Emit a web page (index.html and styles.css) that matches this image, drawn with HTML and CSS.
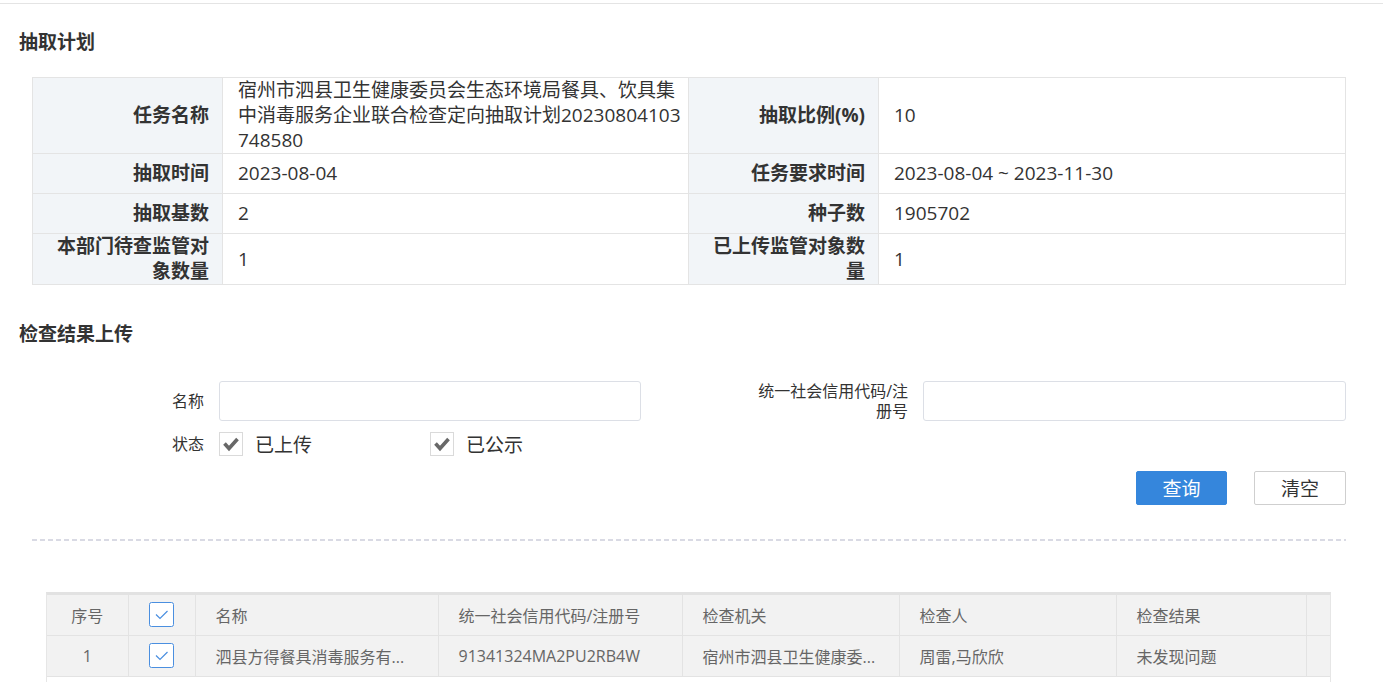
FILE: index.html
```html
<!DOCTYPE html>
<html lang="zh-CN">
<head>
    <meta charset="UTF-8">
    <title>抽取计划</title>
    <link rel="stylesheet" href="styles.css">
</head>
<body>
    <div class="topbar"></div>

    <div class="page">
        <h2 class="section-title">抽取计划</h2>
        <div class="panel">
            <table class="plan">
                <colgroup>
                    <col class="col-label">
                    <col class="col-value">
                    <col class="col-label">
                    <col>
                </colgroup>
                <tr class="row-tall">
                    <th>任务名称</th>
                    <td>宿州市泗县卫生健康委员会生态环境局餐具、饮具集中消毒服务企业联合检查定向抽取计划20230804103748580</td>
                    <th>抽取比例(%)</th>
                    <td>10</td>
                </tr>
                <tr>
                    <th>抽取时间</th>
                    <td>2023-08-04</td>
                    <th>任务要求时间</th>
                    <td>2023-08-04 ~ 2023-11-30</td>
                </tr>
                <tr>
                    <th>抽取基数</th>
                    <td>2</td>
                    <th>种子数</th>
                    <td>1905702</td>
                </tr>
                <tr>
                    <th>本部门待查监管对象数量</th>
                    <td>1</td>
                    <th>已上传监管对象数量</th>
                    <td>1</td>
                </tr>
            </table>
        </div>

        <h2 class="section-title second">检查结果上传</h2>
        <div class="panel">
            <form class="search" onsubmit="return false">
                <label class="f-label" for="name">名称</label>
                <input class="f-input" id="name" type="text">
                <label class="f-label" for="code"><span class="wrap-label">统一社会信用代码/注册号</span></label>
                <input class="f-input" id="code" type="text">

                <span class="f-label f-label-check">状态</span>
                <div class="checks">
                    <label class="check">
                        <svg width="24" height="24" viewBox="0 0 24 24">
                            <rect x="0.5" y="0.5" width="23" height="23" fill="#fff" stroke="#dadada"/>
                            <path d="M5.5 11.5 L10 16.5 L18.5 7" fill="none" stroke="#686868" stroke-width="3.6"/>
                        </svg>
                        <span>已上传</span>
                    </label>
                    <label class="check">
                        <svg width="24" height="24" viewBox="0 0 24 24">
                            <rect x="0.5" y="0.5" width="23" height="23" fill="#fff" stroke="#dadada"/>
                            <path d="M5.5 11.5 L10 16.5 L18.5 7" fill="none" stroke="#686868" stroke-width="3.6"/>
                        </svg>
                        <span>已公示</span>
                    </label>
                </div>
            </form>

            <div class="actions">
                <button class="btn btn-primary" type="button">查询</button>
                <button class="btn" type="button">清空</button>
            </div>

            <div class="dash"></div>

            <div class="grid-wrap">
                <table class="grid">
                    <colgroup>
                        <col style="width:81px">
                        <col style="width:67px">
                        <col style="width:243px">
                        <col style="width:244px">
                        <col style="width:217px">
                        <col style="width:217px">
                        <col style="width:190px">
                        <col style="width:24px">
                    </colgroup>
                    <thead>
                        <tr>
                            <th class="center">序号</th>
                            <th class="center">
                                <svg class="tick" width="25" height="25" viewBox="0 0 25 25">
                                    <rect x="0.5" y="0.5" width="24" height="24" rx="2" fill="#fff" stroke="#4a8fe0"/>
                                    <path d="M7 12.5 L11 16.5 L18.5 9" fill="none" stroke="#4a8fe0" stroke-width="1.2"/>
                                </svg>
                            </th>
                            <th>名称</th>
                            <th>统一社会信用代码/注册号</th>
                            <th>检查机关</th>
                            <th>检查人</th>
                            <th>检查结果</th>
                            <th></th>
                        </tr>
                    </thead>
                    <tbody>
                        <tr>
                            <td class="center">1</td>
                            <td class="center">
                                <svg class="tick" width="25" height="25" viewBox="0 0 25 25">
                                    <rect x="0.5" y="0.5" width="24" height="24" rx="2" fill="#fff" stroke="#4a8fe0"/>
                                    <path d="M7 12.5 L11 16.5 L18.5 9" fill="none" stroke="#4a8fe0" stroke-width="1.2"/>
                                </svg>
                            </td>
                            <td>泗县方得餐具消毒服务有...</td>
                            <td>91341324MA2PU2RB4W</td>
                            <td>宿州市泗县卫生健康委...</td>
                            <td>周雷,马欣欣</td>
                            <td>未发现问题</td>
                            <td></td>
                        </tr>
                    </tbody>
                </table>
            </div>
        </div>
    </div>
</body>
</html>
```

FILE: styles.css
```css
* {
    margin: 0;
    padding: 0;
    box-sizing: border-box;
}

body {
    background-color: #fff;
    color: #333;
    font-family: "Open Sans", "Noto Sans CJK SC", sans-serif;
    font-size: 16px;
    overflow: hidden;
}

.topbar {
    height: 4px;
    border-bottom: 1px solid #e4e4e4;
}

.page {
    padding: 0 37px 0 19px;
}

.section-title {
    font-size: 19px;
    line-height: 24px;
    font-weight: bold;
    color: #333;
    margin-top: 26px;
    margin-bottom: 23px;
}

.section-title.second {
    margin-top: 37px;
    margin-bottom: 35px;
}

.panel {
    padding-left: 13px;
}

/* plan summary table */
.plan {
    width: 100%;
    border-collapse: collapse;
    table-layout: fixed;
    font-size: 19px;
    line-height: 25px;
}

.plan .col-label {
    width: 190px;
}

.plan .col-value {
    width: 466px;
}

.plan th,
.plan td {
    border: 1px solid #e4e4e4;
    height: 40px;
    vertical-align: middle;
}

.plan th {
    background-color: #f2f5f8;
    text-align: right;
    font-weight: bold;
    padding: 0 13px 0 15px;
    color: #333;
}

.plan td {
    padding: 0 6px 0 15px;
    word-break: break-all;
    color: #333;
}

/* search form */
.search {
    display: grid;
    grid-template-columns: 187px 422px 282px 423px;
    grid-template-rows: 40px 25px;
    row-gap: 10px;
    align-items: center;
}

.f-label {
    text-align: right;
    padding-right: 15px;
    font-size: 16px;
    line-height: 20px;
    color: #333;
}

.f-label .wrap-label {
    display: inline-block;
    width: 158px;
    text-align: right;
}

.f-input {
    height: 40px;
    border: 1px solid #dcdfe6;
    border-radius: 3px;
    background: #fff;
    outline: none;
    font-size: 16px;
    padding: 0 10px;
}

.checks {
    grid-column: 2 / 5;
    display: flex;
}

.check {
    width: 211px;
    display: inline-flex;
    align-items: center;
    gap: 12px;
    font-size: 19px;
    color: #333;
}

.check svg {
    display: block;
}

.actions {
    display: flex;
    justify-content: flex-end;
    gap: 27px;
    margin-top: 15px;
}

.btn {
    width: 92px;
    height: 34px;
    border: 1px solid #cfcfcf;
    border-radius: 2px;
    background: #fff;
    color: #333;
    font-family: inherit;
    font-size: 19px;
    cursor: pointer;
}

.btn-primary {
    width: 91px;
    background: #3586dc;
    border-color: #3586dc;
    color: #fff;
}

.dash {
    height: 2px;
    margin-top: 34px;
    background-image: repeating-linear-gradient(to right, #d9dae4 0, #d9dae4 5px, transparent 5px, transparent 8px);
}

/* result grid */
.grid-wrap {
    margin: 51px 15px 0 14px;
    height: 90px;
    border-left: 1px solid #e6e6e6;
    border-right: 1px solid #e6e6e6;
    border-top: 3px solid #e2e2e2;
}

.grid {
    width: 100%;
    border-collapse: collapse;
    table-layout: fixed;
    font-size: 16px;
    color: #666;
}

.grid th,
.grid td {
    background-color: #f2f2f2;
    border-right: 1px solid #e3e3e3;
    border-bottom: 1px solid #e3e3e3;
    padding: 0 20px;
    text-align: left;
    font-weight: normal;
    white-space: nowrap;
    overflow: hidden;
    vertical-align: middle;
}

.grid th:last-child,
.grid td:last-child {
    border-right: none;
}

.grid thead th {
    height: 40px;
}

.grid tbody td {
    height: 41px;
}

.grid .center {
    text-align: center;
    padding: 0;
}

.grid .tick {
    display: inline-block;
    vertical-align: middle;
}
```
